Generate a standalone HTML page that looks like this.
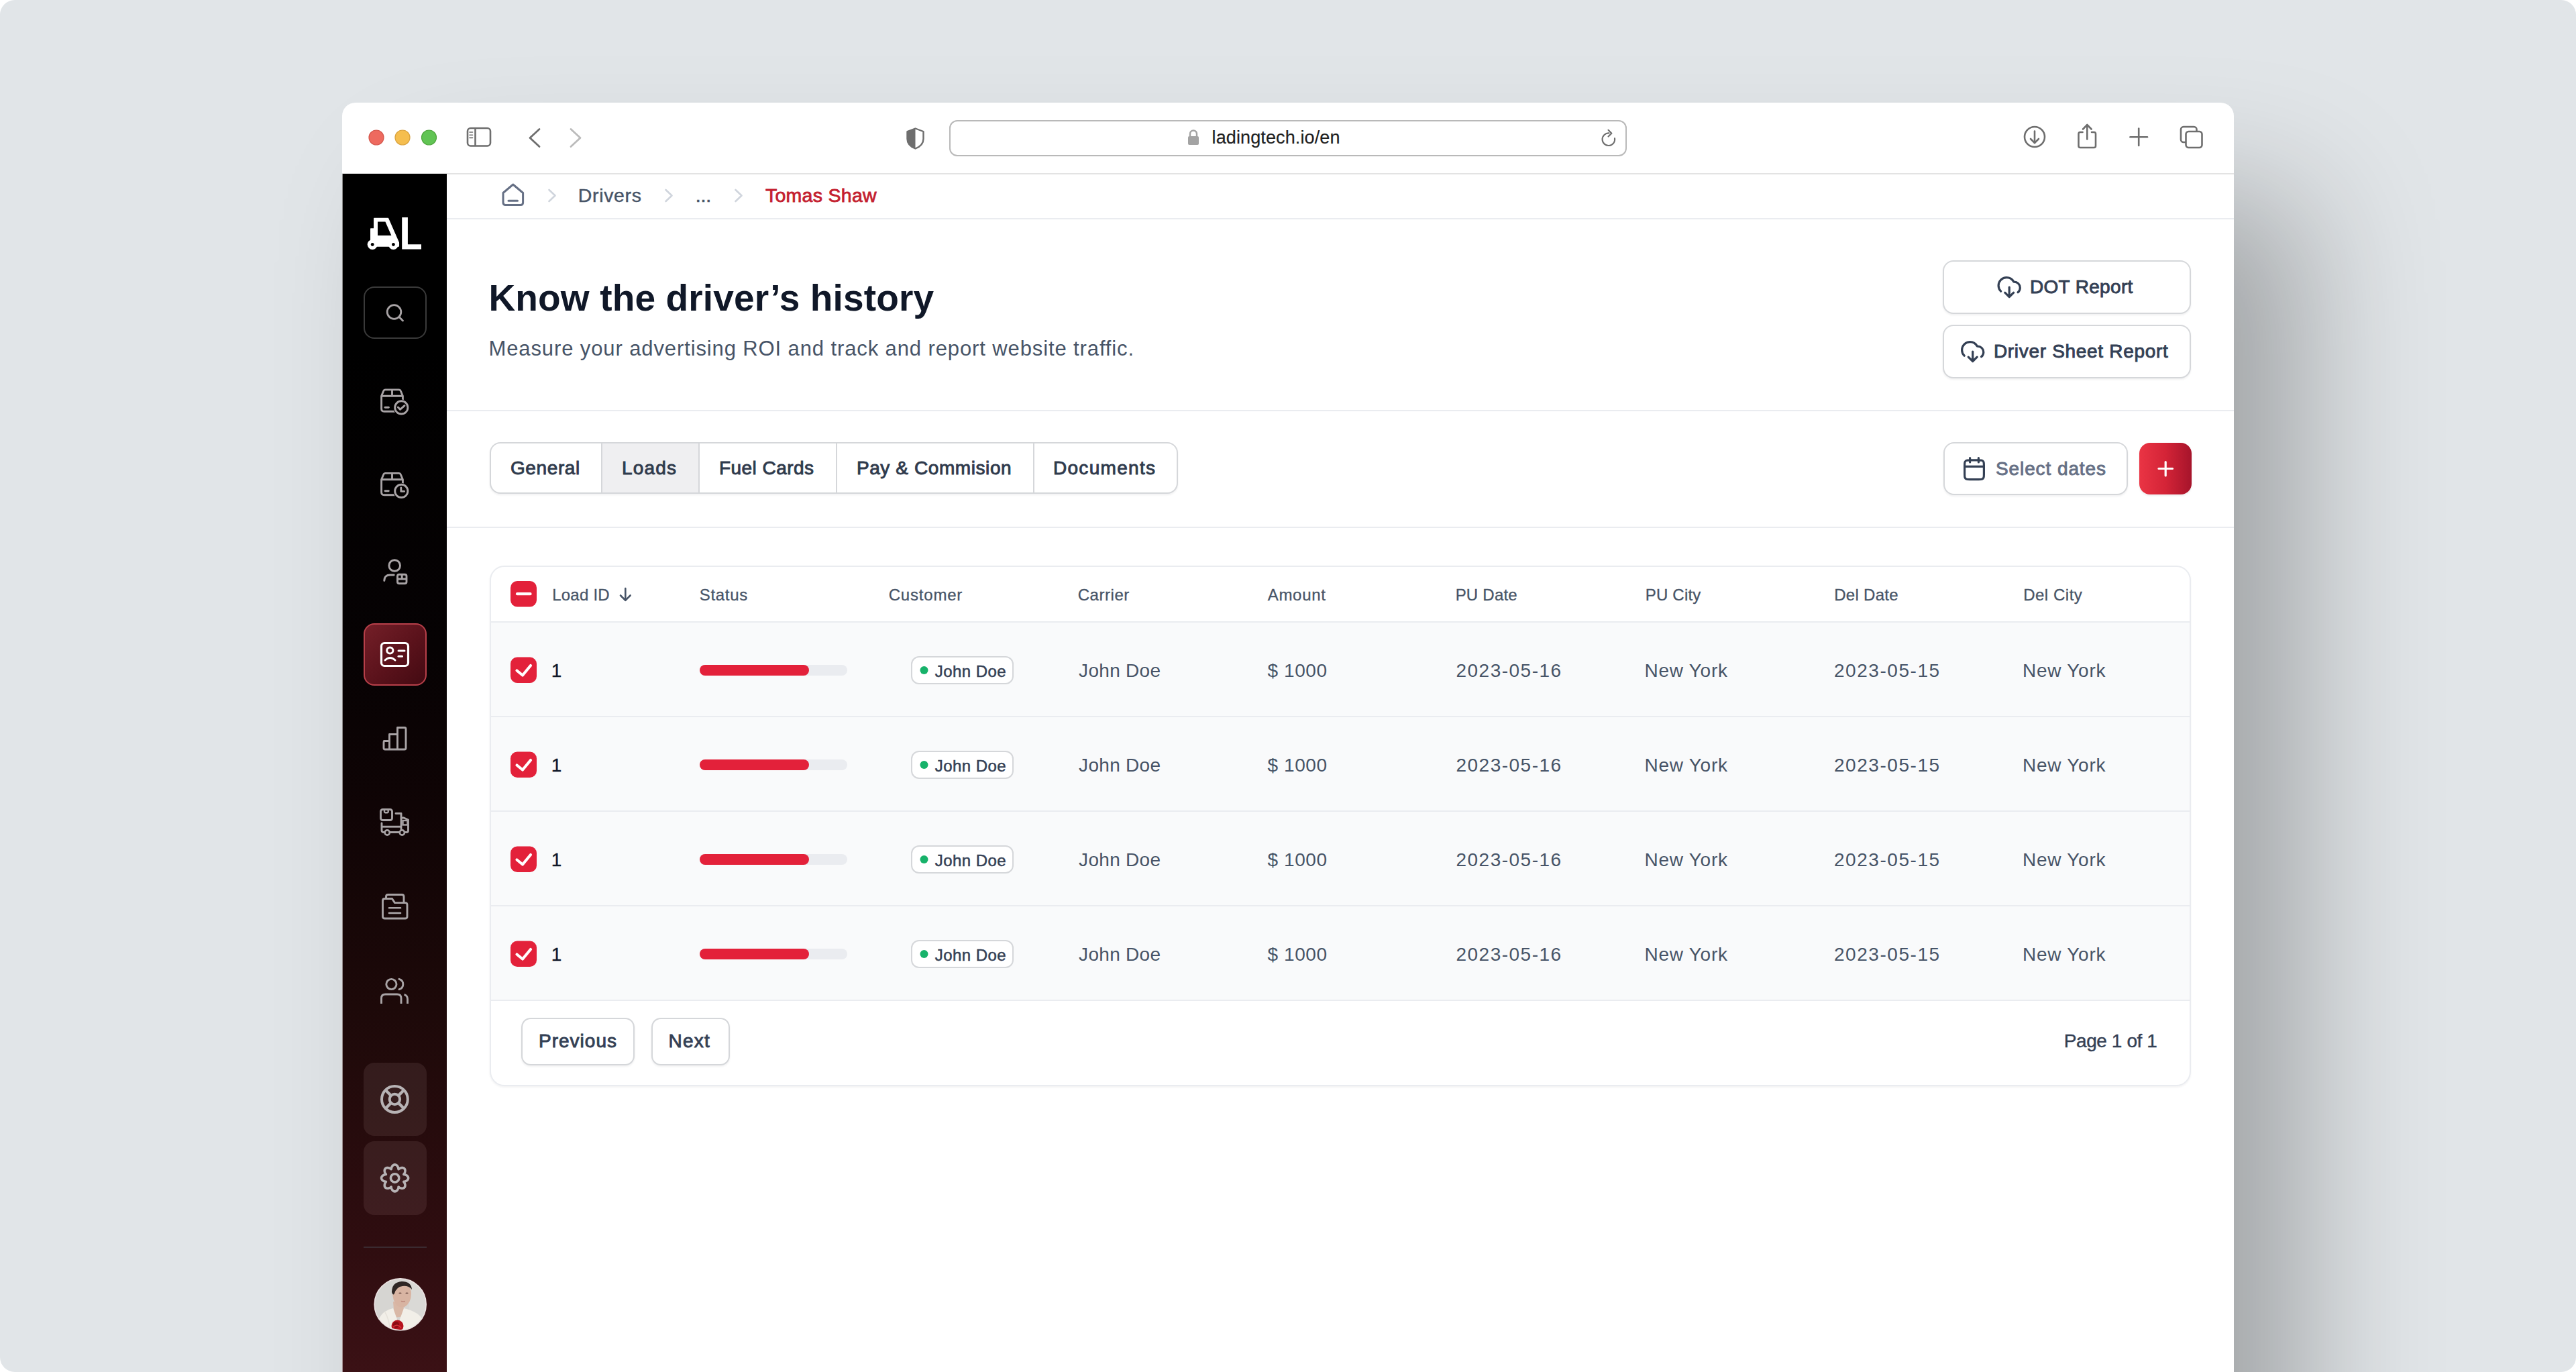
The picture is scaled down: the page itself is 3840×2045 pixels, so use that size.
<!DOCTYPE html>
<html><head><meta charset="utf-8"><style>
html,body{margin:0;padding:0;}
html{background:#ffffff;}
body{width:3840px;height:2045px;position:relative;overflow:hidden;background:#E1E5E8;border-radius:22px;font-family:"Liberation Sans", sans-serif;}
.t{position:absolute;white-space:nowrap;line-height:1;font-family:"Liberation Sans", sans-serif;}
.b{position:absolute;box-sizing:border-box;}
svg.ov{position:absolute;left:0;top:0;}
</style></head><body>
<div class="b" style="left:510px;top:153px;width:2820px;height:2147px;border-radius:20px 20px 0 0;box-shadow:107px 140px 200px rgba(0,0,0,0.28);"></div>
<div class="b" style="left:510px;top:153px;width:2820px;height:1947px;background:#ffffff;border-radius:20px 20px 0 0;"></div>
<div class="b" style="left:510px;top:258px;width:2820px;height:2px;background:#E3E3E3;"></div>
<div class="b" style="left:510px;top:259px;width:156px;height:1786px;border-left:1px solid rgba(255,255,255,0.55);background:linear-gradient(to bottom,#000000 0px,#000000 260px,#060203 700px,#0F0405 941px,#1D0909 1241px,#2F0D10 1601px,#3B1115 1786px);"></div>
<div class="b" style="left:666px;top:325px;width:2664px;height:2px;background:#EAECF0;"></div>
<div class="b" style="left:666px;top:611px;width:2664px;height:2px;background:#EAECF0;"></div>
<div class="b" style="left:666px;top:785px;width:2664px;height:2px;background:#EAECF0;"></div>
<div class="b" style="left:1415px;top:179px;width:1010px;height:54px;border:2.4px solid #B9B9B9;border-radius:12px;"></div>
<div class="t" style="left:1806.6px;top:192.14px;font-size:27px;color:#1F1F1F;font-weight:400;letter-spacing:0.111px;-webkit-text-stroke:0.2px #1F1F1F;">ladingtech.io/en</div>
<div class="t" style="left:861.7px;top:277.37px;font-size:28.5px;color:#475467;font-weight:400;letter-spacing:0.684px;-webkit-text-stroke:0.4px #475467;">Drivers</div>
<div class="t" style="left:1036.8px;top:277.37px;font-size:28.5px;color:#475467;font-weight:400;letter-spacing:-0.218px;-webkit-text-stroke:0.6px #475467;">...</div>
<div class="t" style="left:1140.9px;top:277.37px;font-size:28.5px;color:#C41E2F;font-weight:400;letter-spacing:0.292px;-webkit-text-stroke:0.8px #C41E2F;">Tomas Shaw</div>
<div class="t" style="left:728.5px;top:417.44px;font-size:55px;color:#101828;font-weight:700;letter-spacing:0.144px;">Know the driver&#8217;s history</div>
<div class="t" style="left:728.5px;top:504.26px;font-size:31px;color:#475467;font-weight:400;letter-spacing:0.886px;">Measure your advertising ROI and track and report website traffic.</div>
<div class="b" style="left:2896px;top:388px;width:370px;height:80px;border:2px solid #D5D7DA;border-radius:16px;background:#fff;box-shadow:0 2px 3px rgba(16,24,40,0.06);"></div>
<div class="b" style="left:2896px;top:484px;width:370px;height:80px;border:2px solid #D5D7DA;border-radius:16px;background:#fff;box-shadow:0 2px 3px rgba(16,24,40,0.06);"></div>
<div class="t" style="left:3025.95px;top:413.80px;font-size:28px;color:#344054;font-weight:400;letter-spacing:0.328px;-webkit-text-stroke:0.9px #344054;">DOT Report</div>
<div class="t" style="left:2971.95px;top:509.80px;font-size:28px;color:#344054;font-weight:400;letter-spacing:0.691px;-webkit-text-stroke:0.9px #344054;">Driver Sheet Report</div>
<div class="b" style="left:730px;top:659px;width:1026px;height:77px;border:2px solid #D5D7DA;border-radius:16px;background:#fff;box-shadow:0 2px 3px rgba(16,24,40,0.06);overflow:hidden;"></div>
<div class="b" style="left:897px;top:661px;width:145px;height:73px;background:#EFEFF1;"></div>
<div class="b" style="left:896px;top:661px;width:2px;height:73px;background:#D5D7DA;"></div>
<div class="b" style="left:1041px;top:661px;width:2px;height:73px;background:#D5D7DA;"></div>
<div class="b" style="left:1246px;top:661px;width:2px;height:73px;background:#D5D7DA;"></div>
<div class="b" style="left:1540px;top:661px;width:2px;height:73px;background:#D5D7DA;"></div>
<div class="t" style="left:760.95px;top:683.80px;font-size:28px;color:#2F3A4C;font-weight:400;letter-spacing:0.618px;-webkit-text-stroke:0.9px #2F3A4C;">General</div>
<div class="t" style="left:926.95px;top:683.80px;font-size:28px;color:#2F3A4C;font-weight:400;letter-spacing:1.203px;-webkit-text-stroke:0.9px #2F3A4C;">Loads</div>
<div class="t" style="left:1071.95px;top:683.80px;font-size:28px;color:#2F3A4C;font-weight:400;letter-spacing:0.462px;-webkit-text-stroke:0.9px #2F3A4C;">Fuel Cards</div>
<div class="t" style="left:1276.95px;top:683.80px;font-size:28px;color:#2F3A4C;font-weight:400;letter-spacing:0.583px;-webkit-text-stroke:0.9px #2F3A4C;">Pay &amp; Commision</div>
<div class="t" style="left:1569.95px;top:683.80px;font-size:28px;color:#2F3A4C;font-weight:400;letter-spacing:1.311px;-webkit-text-stroke:0.9px #2F3A4C;">Documents</div>
<div class="b" style="left:2897px;top:659px;width:275px;height:79px;border:2px solid #D5D7DA;border-radius:16px;background:#fff;box-shadow:0 2px 3px rgba(16,24,40,0.06);"></div>
<div class="t" style="left:2974.95px;top:684.80px;font-size:28px;color:#667085;font-weight:400;letter-spacing:0.909px;-webkit-text-stroke:0.9px #667085;">Select dates</div>
<div class="b" style="left:3189px;top:660px;width:78px;height:77px;border-radius:16px;background:linear-gradient(to right,#EA3444 0%,#D42437 50%,#A6142B 100%);box-shadow:0 2px 3px rgba(16,24,40,0.08);"></div>
<div class="b" style="left:730px;top:843px;width:2536px;height:776px;border:2px solid #EAECF0;border-radius:22px;background:#fff;box-shadow:0 2px 3px rgba(16,24,40,0.05);overflow:hidden;"></div>
<div class="b" style="left:732px;top:928px;width:2532px;height:563px;background:#F9FAFB;"></div>
<div class="b" style="left:732px;top:926px;width:2532px;height:2px;background:#EAECF0;"></div>
<div class="b" style="left:732px;top:1067px;width:2532px;height:2px;background:#EAECF0;"></div>
<div class="b" style="left:732px;top:1208px;width:2532px;height:2px;background:#EAECF0;"></div>
<div class="b" style="left:732px;top:1349px;width:2532px;height:2px;background:#EAECF0;"></div>
<div class="b" style="left:732px;top:1490px;width:2532px;height:2px;background:#EAECF0;"></div>
<div class="t" style="left:823.15px;top:875.18px;font-size:24px;color:#475467;font-weight:400;letter-spacing:0.246px;-webkit-text-stroke:0.3px #475467;">Load ID</div>
<div class="t" style="left:1042.65px;top:875.18px;font-size:24px;color:#475467;font-weight:400;letter-spacing:0.732px;-webkit-text-stroke:0.3px #475467;">Status</div>
<div class="t" style="left:1324.65px;top:875.18px;font-size:24px;color:#475467;font-weight:400;letter-spacing:0.809px;-webkit-text-stroke:0.3px #475467;">Customer</div>
<div class="t" style="left:1606.65px;top:875.18px;font-size:24px;color:#475467;font-weight:400;letter-spacing:0.559px;-webkit-text-stroke:0.3px #475467;">Carrier</div>
<div class="t" style="left:1889.65px;top:875.18px;font-size:24px;color:#475467;font-weight:400;letter-spacing:0.731px;-webkit-text-stroke:0.3px #475467;">Amount</div>
<div class="t" style="left:2169.65px;top:875.18px;font-size:24px;color:#475467;font-weight:400;letter-spacing:0.224px;-webkit-text-stroke:0.3px #475467;">PU Date</div>
<div class="t" style="left:2452.65px;top:875.18px;font-size:24px;color:#475467;font-weight:400;letter-spacing:0.227px;-webkit-text-stroke:0.3px #475467;">PU City</div>
<div class="t" style="left:2734.15px;top:875.18px;font-size:24px;color:#475467;font-weight:400;letter-spacing:0.31px;-webkit-text-stroke:0.3px #475467;">Del Date</div>
<div class="t" style="left:3016.15px;top:875.18px;font-size:24px;color:#475467;font-weight:400;letter-spacing:0.527px;-webkit-text-stroke:0.3px #475467;">Del City</div>
<div class="t" style="left:821.65px;top:985.80px;font-size:28px;color:#101828;font-weight:400;letter-spacing:0px;-webkit-text-stroke:0.3px #101828;">1</div>
<div class="b" style="left:1043px;top:991px;width:220px;height:16px;background:#EAECF0;border-radius:8px;"></div>
<div class="b" style="left:1043px;top:991px;width:163px;height:16px;background:#E3213A;border-radius:8px;"></div>
<div class="b" style="left:1358px;top:978px;width:153px;height:42px;border:2px solid #D5D7DA;border-radius:12px;background:#fff;"></div>
<div class="t" style="left:1393.75px;top:988.68px;font-size:24px;color:#344054;font-weight:400;letter-spacing:0.444px;-webkit-text-stroke:0.5px #344054;">John Doe</div>
<div class="t" style="left:1608.1px;top:985.80px;font-size:28px;color:#475467;font-weight:400;letter-spacing:0.302px;">John Doe</div>
<div class="t" style="left:1889.5px;top:985.80px;font-size:28px;color:#475467;font-weight:400;letter-spacing:0.586px;">$ 1000</div>
<div class="t" style="left:2170.5px;top:985.80px;font-size:28px;color:#475467;font-weight:400;letter-spacing:1.483px;">2023-05-16</div>
<div class="t" style="left:2451.5px;top:985.80px;font-size:28px;color:#475467;font-weight:400;letter-spacing:0.744px;">New York</div>
<div class="t" style="left:2734.0px;top:985.80px;font-size:28px;color:#475467;font-weight:400;letter-spacing:1.538px;">2023-05-15</div>
<div class="t" style="left:3015.0px;top:985.80px;font-size:28px;color:#475467;font-weight:400;letter-spacing:0.744px;">New York</div>
<div class="t" style="left:821.65px;top:1126.80px;font-size:28px;color:#101828;font-weight:400;letter-spacing:0px;-webkit-text-stroke:0.3px #101828;">1</div>
<div class="b" style="left:1043px;top:1132px;width:220px;height:16px;background:#EAECF0;border-radius:8px;"></div>
<div class="b" style="left:1043px;top:1132px;width:163px;height:16px;background:#E3213A;border-radius:8px;"></div>
<div class="b" style="left:1358px;top:1119px;width:153px;height:42px;border:2px solid #D5D7DA;border-radius:12px;background:#fff;"></div>
<div class="t" style="left:1393.75px;top:1129.68px;font-size:24px;color:#344054;font-weight:400;letter-spacing:0.444px;-webkit-text-stroke:0.5px #344054;">John Doe</div>
<div class="t" style="left:1608.1px;top:1126.80px;font-size:28px;color:#475467;font-weight:400;letter-spacing:0.302px;">John Doe</div>
<div class="t" style="left:1889.5px;top:1126.80px;font-size:28px;color:#475467;font-weight:400;letter-spacing:0.586px;">$ 1000</div>
<div class="t" style="left:2170.5px;top:1126.80px;font-size:28px;color:#475467;font-weight:400;letter-spacing:1.483px;">2023-05-16</div>
<div class="t" style="left:2451.5px;top:1126.80px;font-size:28px;color:#475467;font-weight:400;letter-spacing:0.744px;">New York</div>
<div class="t" style="left:2734.0px;top:1126.80px;font-size:28px;color:#475467;font-weight:400;letter-spacing:1.538px;">2023-05-15</div>
<div class="t" style="left:3015.0px;top:1126.80px;font-size:28px;color:#475467;font-weight:400;letter-spacing:0.744px;">New York</div>
<div class="t" style="left:821.65px;top:1267.80px;font-size:28px;color:#101828;font-weight:400;letter-spacing:0px;-webkit-text-stroke:0.3px #101828;">1</div>
<div class="b" style="left:1043px;top:1273px;width:220px;height:16px;background:#EAECF0;border-radius:8px;"></div>
<div class="b" style="left:1043px;top:1273px;width:163px;height:16px;background:#E3213A;border-radius:8px;"></div>
<div class="b" style="left:1358px;top:1260px;width:153px;height:42px;border:2px solid #D5D7DA;border-radius:12px;background:#fff;"></div>
<div class="t" style="left:1393.75px;top:1270.68px;font-size:24px;color:#344054;font-weight:400;letter-spacing:0.444px;-webkit-text-stroke:0.5px #344054;">John Doe</div>
<div class="t" style="left:1608.1px;top:1267.80px;font-size:28px;color:#475467;font-weight:400;letter-spacing:0.302px;">John Doe</div>
<div class="t" style="left:1889.5px;top:1267.80px;font-size:28px;color:#475467;font-weight:400;letter-spacing:0.586px;">$ 1000</div>
<div class="t" style="left:2170.5px;top:1267.80px;font-size:28px;color:#475467;font-weight:400;letter-spacing:1.483px;">2023-05-16</div>
<div class="t" style="left:2451.5px;top:1267.80px;font-size:28px;color:#475467;font-weight:400;letter-spacing:0.744px;">New York</div>
<div class="t" style="left:2734.0px;top:1267.80px;font-size:28px;color:#475467;font-weight:400;letter-spacing:1.538px;">2023-05-15</div>
<div class="t" style="left:3015.0px;top:1267.80px;font-size:28px;color:#475467;font-weight:400;letter-spacing:0.744px;">New York</div>
<div class="t" style="left:821.65px;top:1408.80px;font-size:28px;color:#101828;font-weight:400;letter-spacing:0px;-webkit-text-stroke:0.3px #101828;">1</div>
<div class="b" style="left:1043px;top:1414px;width:220px;height:16px;background:#EAECF0;border-radius:8px;"></div>
<div class="b" style="left:1043px;top:1414px;width:163px;height:16px;background:#E3213A;border-radius:8px;"></div>
<div class="b" style="left:1358px;top:1401px;width:153px;height:42px;border:2px solid #D5D7DA;border-radius:12px;background:#fff;"></div>
<div class="t" style="left:1393.75px;top:1411.68px;font-size:24px;color:#344054;font-weight:400;letter-spacing:0.444px;-webkit-text-stroke:0.5px #344054;">John Doe</div>
<div class="t" style="left:1608.1px;top:1408.80px;font-size:28px;color:#475467;font-weight:400;letter-spacing:0.302px;">John Doe</div>
<div class="t" style="left:1889.5px;top:1408.80px;font-size:28px;color:#475467;font-weight:400;letter-spacing:0.586px;">$ 1000</div>
<div class="t" style="left:2170.5px;top:1408.80px;font-size:28px;color:#475467;font-weight:400;letter-spacing:1.483px;">2023-05-16</div>
<div class="t" style="left:2451.5px;top:1408.80px;font-size:28px;color:#475467;font-weight:400;letter-spacing:0.744px;">New York</div>
<div class="t" style="left:2734.0px;top:1408.80px;font-size:28px;color:#475467;font-weight:400;letter-spacing:1.538px;">2023-05-15</div>
<div class="t" style="left:3015.0px;top:1408.80px;font-size:28px;color:#475467;font-weight:400;letter-spacing:0.744px;">New York</div>
<div class="b" style="left:777px;top:1517px;width:169px;height:71px;border:2px solid #D5D7DA;border-radius:16px;background:#fff;box-shadow:0 2px 3px rgba(16,24,40,0.06);border-radius:14px;"></div>
<div class="b" style="left:971px;top:1517px;width:117px;height:71px;border:2px solid #D5D7DA;border-radius:16px;background:#fff;box-shadow:0 2px 3px rgba(16,24,40,0.06);border-radius:14px;"></div>
<div class="t" style="left:802.95px;top:1538.30px;font-size:28px;color:#344054;font-weight:400;letter-spacing:1.023px;-webkit-text-stroke:0.9px #344054;">Previous</div>
<div class="t" style="left:996.55px;top:1538.30px;font-size:28px;color:#344054;font-weight:400;letter-spacing:1.236px;-webkit-text-stroke:0.9px #344054;">Next</div>
<div class="t" style="left:3076.7px;top:1538.30px;font-size:28px;color:#344054;font-weight:400;letter-spacing:-0.405px;-webkit-text-stroke:0.4px #344054;">Page 1 of 1</div>
<div class="b" style="left:542px;top:427px;width:94px;height:78px;border:2px solid #3A3A3A;border-radius:16px;"></div>
<div class="b" style="left:542px;top:929px;width:94px;height:93px;border:2px solid #B8404A;border-radius:16px;background:linear-gradient(135deg,#741F28 0%,#5A121B 55%,#430A12 100%);"></div>
<div class="b" style="left:542px;top:1584px;width:94px;height:109px;background:rgba(255,215,215,0.085);border-radius:16px;"></div>
<div class="b" style="left:542px;top:1701px;width:94px;height:110px;background:rgba(255,215,215,0.085);border-radius:16px;"></div>
<div class="b" style="left:542px;top:1858px;width:94px;height:2px;background:#3A2A30;"></div>
<!--CONTENT--><svg class="ov" width="3840" height="2045" viewBox="0 0 3840 2045"><circle cx="561" cy="205" r="11" fill="#EE6A5F" stroke="#D4574C" stroke-width="1.2"/><circle cx="600" cy="205" r="11" fill="#F5BE4F" stroke="#D9A23E" stroke-width="1.2"/><circle cx="639.5" cy="205" r="11" fill="#61C454" stroke="#50A63F" stroke-width="1.2"/><rect x="697" y="191" width="34" height="26.5" rx="4.5" fill="none" stroke="#6E6E6E" stroke-width="2.6"/><line x1="708.5" y1="191" x2="708.5" y2="217.5" stroke="#6E6E6E" stroke-width="2.6"/><line x1="700" y1="197" x2="704.5" y2="197" stroke="#6E6E6E" stroke-width="1.6" stroke-linecap="round"/><line x1="700" y1="201.2" x2="704.5" y2="201.2" stroke="#6E6E6E" stroke-width="1.6" stroke-linecap="round"/><line x1="700" y1="205.4" x2="704.5" y2="205.4" stroke="#6E6E6E" stroke-width="1.6" stroke-linecap="round"/><polyline points="804,192.5 790,205.5 804,218.5" fill="none" stroke="#6E6E6E" stroke-width="2.8" stroke-linecap="round" stroke-linejoin="round"/><polyline points="851,192.5 865,205.5 851,218.5" fill="none" stroke="#BBBBBB" stroke-width="2.8" stroke-linecap="round" stroke-linejoin="round"/><path d="M1364.5,191.5 L1376.5,196 L1376.5,207 C1376.5,214 1371,219 1364.5,221.5 C1358,219 1352.5,214 1352.5,207 L1352.5,196 Z" fill="none" stroke="#6E6E6E" stroke-width="2.4" stroke-linejoin="round"/><path d="M1364.5,191.5 L1352.5,196 L1352.5,207 C1352.5,214 1358,219 1364.5,221.5 Z" fill="#6E6E6E"/><rect x="1771" y="203" width="16" height="13" rx="2" fill="#A3A3A3"/><path d="M1774,204 L1774,199.5 A5,5 0 0 1 1784,199.5 L1784,204" fill="none" stroke="#A3A3A3" stroke-width="2.4"/><path d="M2407,206 A9.3,9.3 0 1 1 2398.5,198.4" fill="none" stroke="#6E6E6E" stroke-width="2.1" stroke-linecap="round"/><polyline points="2397.5,193.8 2402.4,198.7 2397.5,203.5" fill="none" stroke="#6E6E6E" stroke-width="2.1" stroke-linecap="round" stroke-linejoin="round"/><circle cx="3033" cy="204" r="15" fill="none" stroke="#6E6E6E" stroke-width="2.6"/><line x1="3033" y1="195.5" x2="3033" y2="213" stroke="#6E6E6E" stroke-width="2.6" stroke-linecap="round"/><polyline points="3027,207 3033,213 3039,207" fill="none" stroke="#6E6E6E" stroke-width="2.6" stroke-linecap="round" stroke-linejoin="round"/><path d="M3104.5,197 L3101,197 Q3098.5,197 3098.5,199.5 L3098.5,217.5 Q3098.5,220 3101,220 L3121.5,220 Q3124,220 3124,217.5 L3124,199.5 Q3124,197 3121.5,197 L3118,197" fill="none" stroke="#6E6E6E" stroke-width="2.6" stroke-linecap="round" stroke-linejoin="round"/><line x1="3111.3" y1="186.5" x2="3111.3" y2="207.5" stroke="#6E6E6E" stroke-width="2.6" stroke-linecap="round"/><polyline points="3105,192.5 3111.3,186 3117.6,192.5" fill="none" stroke="#6E6E6E" stroke-width="2.6" stroke-linecap="round" stroke-linejoin="round"/><line x1="3175.5" y1="204.2" x2="3201" y2="204.2" stroke="#6E6E6E" stroke-width="2.6" stroke-linecap="round"/><line x1="3188.2" y1="191.5" x2="3188.2" y2="217" stroke="#6E6E6E" stroke-width="2.6" stroke-linecap="round"/><rect x="3251" y="189" width="23.5" height="23" rx="4" fill="none" stroke="#6E6E6E" stroke-width="2.6"/><rect x="3258.5" y="196" width="24" height="24" rx="4" fill="#ffffff" stroke="#6E6E6E" stroke-width="2.6"/><path d="M750,287.5 L764.8,275 L779.6,287.5 L779.6,302 Q779.6,305.5 776,305.5 L753.6,305.5 Q750,305.5 750,302 Z" fill="none" stroke="#667085" stroke-width="3" stroke-linejoin="round"/><line x1="758" y1="299.3" x2="771.5" y2="299.3" stroke="#667085" stroke-width="3" stroke-linecap="round"/><polyline points="818.5,283 827.5,291.5 818.5,300" fill="none" stroke="#D0D5DD" stroke-width="2.6" stroke-linecap="round" stroke-linejoin="round"/><polyline points="992.5,283 1001.5,291.5 992.5,300" fill="none" stroke="#D0D5DD" stroke-width="2.6" stroke-linecap="round" stroke-linejoin="round"/><polyline points="1096.5,283 1105.5,291.5 1096.5,300" fill="none" stroke="#D0D5DD" stroke-width="2.6" stroke-linecap="round" stroke-linejoin="round"/><g transform="translate(2975.89,408.78) scale(1.61)"><path d="M8 17L12 21M12 21L16 17M12 21V12M20 16.7428C21.2215 15.734 22 14.2079 22 12.5C22 9.46243 19.5376 7 16.5 7C16.2815 7 16.0771 6.886 15.9661 6.69774C14.6621 4.48484 12.2544 3 9.5 3C5.35786 3 2 6.35786 2 10.5C2 12.5661 2.83545 14.4371 4.18695 15.7935" fill="none" stroke="#344054" stroke-width="2" stroke-linecap="round" stroke-linejoin="round"/></g><g transform="translate(2921.39,504.78) scale(1.61)"><path d="M8 17L12 21M12 21L16 17M12 21V12M20 16.7428C21.2215 15.734 22 14.2079 22 12.5C22 9.46243 19.5376 7 16.5 7C16.2815 7 16.0771 6.886 15.9661 6.69774C14.6621 4.48484 12.2544 3 9.5 3C5.35786 3 2 6.35786 2 10.5C2 12.5661 2.83545 14.4371 4.18695 15.7935" fill="none" stroke="#344054" stroke-width="2" stroke-linecap="round" stroke-linejoin="round"/></g><g transform="translate(2923.80,679.40) scale(1.6)"><path d="M21 10H3M16 2V6M8 2V6M7.8 22H16.2C17.8802 22 18.7202 22 19.362 21.673C19.9265 21.3854 20.3854 20.9265 20.673 20.362C21 19.7202 21 18.8802 21 17.2V8.8C21 7.11984 21 6.27976 20.673 5.63803C20.3854 5.07354 19.9265 4.6146 19.362 4.32698C18.7202 4 17.8802 4 16.2 4H7.8C6.11984 4 5.27976 4 4.63803 4.32698C4.07354 4.6146 3.6146 5.07354 3.32698 5.63803C3 6.27976 3 7.11984 3 8.8V17.2C3 18.8802 3 19.7202 3.32698 20.362C3.6146 20.9265 4.07354 21.3854 4.63803 21.673C5.27976 22 6.11984 22 7.8 22Z" fill="none" stroke="#344054" stroke-width="2" stroke-linecap="round" stroke-linejoin="round"/></g><line x1="3218" y1="698.5" x2="3238.5" y2="698.5" stroke="#fff" stroke-width="3.2" stroke-linecap="round"/><line x1="3228.2" y1="688.5" x2="3228.2" y2="709" stroke="#fff" stroke-width="3.2" stroke-linecap="round"/><rect x="761" y="866" width="39" height="38.5" rx="10" fill="#E3213A"/><line x1="771" y1="885.2" x2="790.5" y2="885.2" stroke="#fff" stroke-width="4.2" stroke-linecap="round"/><line x1="932.3" y1="877" x2="932.3" y2="894.5" stroke="#475467" stroke-width="2.6" stroke-linecap="round"/><polyline points="925,887.5 932.3,894.8 939.6,887.5" fill="none" stroke="#475467" stroke-width="2.6" stroke-linecap="round" stroke-linejoin="round"/><rect x="761" y="979.5" width="39" height="38.5" rx="10" fill="#E3213A"/><polyline points="770.5,999.5 779,1006.5 791,992" fill="none" stroke="#fff" stroke-width="4.2" stroke-linecap="round" stroke-linejoin="round"/><circle cx="1377.5" cy="999" r="6" fill="#17B26A"/><rect x="761" y="1120.5" width="39" height="38.5" rx="10" fill="#E3213A"/><polyline points="770.5,1140.5 779,1147.5 791,1133" fill="none" stroke="#fff" stroke-width="4.2" stroke-linecap="round" stroke-linejoin="round"/><circle cx="1377.5" cy="1140" r="6" fill="#17B26A"/><rect x="761" y="1261.5" width="39" height="38.5" rx="10" fill="#E3213A"/><polyline points="770.5,1281.5 779,1288.5 791,1274" fill="none" stroke="#fff" stroke-width="4.2" stroke-linecap="round" stroke-linejoin="round"/><circle cx="1377.5" cy="1281" r="6" fill="#17B26A"/><rect x="761" y="1402.5" width="39" height="38.5" rx="10" fill="#E3213A"/><polyline points="770.5,1422.5 779,1429.5 791,1415" fill="none" stroke="#fff" stroke-width="4.2" stroke-linecap="round" stroke-linejoin="round"/><circle cx="1377.5" cy="1422" r="6" fill="#17B26A"/><g transform="translate(540,310)"><path d="M17.8,15.5 L38.5,15.5 L54.3,51.5 L54.3,57 L12.8,57 L12.8,31 L17.8,31 Z" fill="#fff" stroke="#fff" stroke-width="1.5" stroke-linejoin="round"/><path d="M23,20.4 L34.4,20.4 L43.4,41.1 L23,41.1 Z" fill="#000"/><circle cx="15.2" cy="54.5" r="7.5" fill="#fff"/><circle cx="15.2" cy="54.5" r="2.4" fill="#000"/><circle cx="46.4" cy="54.5" r="7.5" fill="#fff"/><circle cx="46.4" cy="54.5" r="2.4" fill="#000"/><path d="M59.2,14 L67.9,14 L67.9,54.2 L88,54.2 L88,61.6 L59.2,61.6 Z" fill="#fff"/></g><circle cx="587.5" cy="465" r="10.3" fill="none" stroke="#A8A3A5" stroke-width="2.8"/><line x1="595" y1="472.5" x2="600.5" y2="478" stroke="#A8A3A5" stroke-width="2.8" stroke-linecap="round"/><path d="M600.4,597 L600.4,590.2 L597.4,583 Q596.6,580.9 594.4,580.9 L574.6,580.9 Q572.4,580.9 571.6,583 L568.6,590.2 L568.6,609.3 Q568.6,613.3 572.6,613.3 L589,613.3" fill="none" stroke="#A8A3A5" stroke-width="2.9" stroke-linejoin="round"/><line x1="568.6" y1="590.2" x2="600.4" y2="590.2" stroke="#A8A3A5" stroke-width="2.9"/><line x1="584.5" y1="580.9" x2="584.5" y2="590.2" stroke="#A8A3A5" stroke-width="2.9"/><line x1="574" y1="607.2" x2="579.3" y2="607.2" stroke="#A8A3A5" stroke-width="2.9" stroke-linecap="round"/><circle cx="598.3" cy="607.4" r="10" fill="#040101" stroke="#040101" stroke-width="4"/><circle cx="598.3" cy="607.4" r="9.6" fill="none" stroke="#A8A3A5" stroke-width="2.9"/><polyline points="593.3,607.1 596.4,610.3 603.0,604.6" fill="none" stroke="#A8A3A5" stroke-width="2.9" stroke-linecap="round" stroke-linejoin="round"/><path d="M600.4,721.5 L600.4,714.7 L597.4,707.5 Q596.6,705.4 594.4,705.4 L574.6,705.4 Q572.4,705.4 571.6,707.5 L568.6,714.7 L568.6,733.8 Q568.6,737.8 572.6,737.8 L589,737.8" fill="none" stroke="#A8A3A5" stroke-width="2.9" stroke-linejoin="round"/><line x1="568.6" y1="714.7" x2="600.4" y2="714.7" stroke="#A8A3A5" stroke-width="2.9"/><line x1="584.5" y1="705.4" x2="584.5" y2="714.7" stroke="#A8A3A5" stroke-width="2.9"/><line x1="574" y1="731.7" x2="579.3" y2="731.7" stroke="#A8A3A5" stroke-width="2.9" stroke-linecap="round"/><circle cx="598.3" cy="731.9" r="10" fill="#040101" stroke="#040101" stroke-width="4"/><circle cx="598.3" cy="731.9" r="9.6" fill="none" stroke="#A8A3A5" stroke-width="2.9"/><polyline points="597.8,726.9 597.8,732.4 602.5999999999999,732.4" fill="none" stroke="#A8A3A5" stroke-width="2.9" stroke-linecap="round" stroke-linejoin="round"/><circle cx="588.2" cy="843" r="8.3" fill="none" stroke="#A8A3A5" stroke-width="2.9"/><path d="M572.8,865.5 C572.8,859.5 576.5,857 581,857 L587.2,857" fill="none" stroke="#A8A3A5" stroke-width="2.9" stroke-linecap="round"/><rect x="592.5" y="856.3" width="13.5" height="13.5" rx="2.5" fill="none" stroke="#A8A3A5" stroke-width="2.9"/><line x1="592.5" y1="863" x2="606" y2="863" stroke="#A8A3A5" stroke-width="2.9"/><line x1="599.2" y1="856.3" x2="599.2" y2="863" stroke="#A8A3A5" stroke-width="2.9"/><rect x="568.5" y="958.5" width="40" height="34" rx="4.5" fill="none" stroke="#fff" stroke-width="3.2"/><circle cx="581.3" cy="969.5" r="4.6" fill="none" stroke="#fff" stroke-width="3"/><path d="M574,984 Q581.5,977 589,984" fill="none" stroke="#fff" stroke-width="3" stroke-linecap="round"/><line x1="594" y1="970" x2="603" y2="970" stroke="#fff" stroke-width="3" stroke-linecap="round"/><line x1="594" y1="978.3" x2="599.5" y2="978.3" stroke="#fff" stroke-width="3" stroke-linecap="round"/><path d="M572.5,1104.5 L580.5,1104.5 L580.5,1094.5 L592.5,1094.5 L592.5,1084.5 Q592.5,1084.5 594.5,1084.5 L603,1084.5 Q605,1084.5 605,1086.5 L605,1115 Q605,1117 603,1117 L574,1117 Q572,1117 572,1115 L572,1106.5 Q572,1104.5 574,1104.5 Z" fill="none" stroke="#A8A3A5" stroke-width="2.9" stroke-linejoin="round"/><line x1="580.5" y1="1104.5" x2="580.5" y2="1117" stroke="#A8A3A5" stroke-width="2.9"/><line x1="592.5" y1="1094.5" x2="592.5" y2="1117" stroke="#A8A3A5" stroke-width="2.9"/><rect x="567.5" y="1206.5" width="17" height="16" rx="3" fill="none" stroke="#A8A3A5" stroke-width="2.9"/><path d="M573,1206.5 L573,1210 Q573,1211.2 574.2,1211.2 L577.5,1211.2 Q578.7,1211.2 578.7,1210 L578.7,1206.5" fill="none" stroke="#A8A3A5" stroke-width="2.4"/><path d="M569,1227 L569,1237.5 Q569,1240.5 572,1240.5 L606,1240.5 Q608.5,1240.5 608.5,1238 L608.5,1222 L602,1219 L598,1219 L598,1212.5 L590,1212.5" fill="none" stroke="#A8A3A5" stroke-width="2.9" stroke-linejoin="round" stroke-linecap="round"/><line x1="569" y1="1232.2" x2="597" y2="1232.2" stroke="#A8A3A5" stroke-width="2.9"/><rect x="600.5" y="1223" width="7" height="6.5" fill="none" stroke="#A8A3A5" stroke-width="2.4"/><line x1="598" y1="1219" x2="598" y2="1240" stroke="#A8A3A5" stroke-width="2.9"/><circle cx="577.2" cy="1241" r="3.6" fill="#120607" stroke="#A8A3A5" stroke-width="2.6"/><circle cx="599.4" cy="1241" r="3.6" fill="#120607" stroke="#A8A3A5" stroke-width="2.6"/><path d="M575.5,1339 L575.5,1336.5 Q575.5,1333.5 578.5,1333.5 L599,1333.5 Q602,1333.5 602,1336.5 L602,1345.5" fill="none" stroke="#A8A3A5" stroke-width="2.9" stroke-linejoin="round"/><path d="M570.5,1342.5 Q570.5,1339.5 573.5,1339.5 L584.5,1339.5 L588.5,1345.6 L604,1345.6 Q607,1345.6 607,1348.6 L607,1366 Q607,1369 604,1369 L573.5,1369 Q570.5,1369 570.5,1366 Z" fill="none" stroke="#A8A3A5" stroke-width="2.9" stroke-linejoin="round"/><line x1="580" y1="1353.3" x2="597" y2="1353.3" stroke="#A8A3A5" stroke-width="2.6" stroke-linecap="round"/><line x1="580" y1="1360.9" x2="597" y2="1360.9" stroke="#A8A3A5" stroke-width="2.6" stroke-linecap="round"/><circle cx="583.4" cy="1467" r="7.6" fill="none" stroke="#A8A3A5" stroke-width="2.9"/><path d="M595,1459.3 A8,8 0 0 1 595,1474.7" fill="none" stroke="#A8A3A5" stroke-width="2.9" stroke-linecap="round"/><path d="M568.5,1496 L568.5,1488 Q568.5,1482 574.5,1482 L592,1482 Q598,1482 598,1488 L598,1496" fill="none" stroke="#A8A3A5" stroke-width="2.9"/><path d="M602.5,1482.3 Q607.5,1484 607.5,1489 L607.5,1496" fill="none" stroke="#A8A3A5" stroke-width="2.9"/><circle cx="588.4" cy="1638.5" r="19.4" fill="none" stroke="#B7B3B5" stroke-width="4"/><circle cx="588.4" cy="1638.5" r="7.7" fill="none" stroke="#B7B3B5" stroke-width="4"/><line x1="594.06" y1="1644.16" x2="602.12" y2="1652.22" stroke="#B7B3B5" stroke-width="4.4"/><line x1="582.74" y1="1644.16" x2="574.68" y2="1652.22" stroke="#B7B3B5" stroke-width="4.4"/><line x1="582.74" y1="1632.84" x2="574.68" y2="1624.78" stroke="#B7B3B5" stroke-width="4.4"/><line x1="594.06" y1="1632.84" x2="602.12" y2="1624.78" stroke="#B7B3B5" stroke-width="4.4"/><polygon points="588.60,1735.90 589.12,1735.94 589.64,1736.05 590.15,1736.23 590.64,1736.48 591.12,1736.79 591.57,1737.17 591.99,1737.61 592.38,1738.11 592.74,1738.65 593.06,1739.24 593.35,1739.86 593.60,1740.52 593.80,1741.21 593.96,1741.93 594.07,1742.69 594.69,1742.23 595.31,1741.84 595.94,1741.49 596.58,1741.20 597.23,1740.96 597.87,1740.77 598.51,1740.64 599.13,1740.57 599.74,1740.56 600.33,1740.61 600.89,1740.72 601.42,1740.89 601.90,1741.13 602.35,1741.41 602.74,1741.76 603.09,1742.15 603.37,1742.60 603.61,1743.08 603.78,1743.61 603.89,1744.17 603.94,1744.76 603.93,1745.37 603.86,1745.99 603.73,1746.63 603.54,1747.27 603.30,1747.92 603.01,1748.56 602.66,1749.19 602.27,1749.81 601.81,1750.43 602.57,1750.54 603.29,1750.70 603.98,1750.90 604.64,1751.15 605.26,1751.44 605.85,1751.76 606.39,1752.12 606.89,1752.51 607.33,1752.93 607.71,1753.38 608.02,1753.86 608.27,1754.35 608.45,1754.86 608.56,1755.38 608.60,1755.90 608.56,1756.42 608.45,1756.94 608.27,1757.45 608.02,1757.94 607.71,1758.42 607.33,1758.87 606.89,1759.29 606.39,1759.68 605.85,1760.04 605.26,1760.36 604.64,1760.65 603.98,1760.90 603.29,1761.10 602.57,1761.26 601.81,1761.37 602.27,1761.99 602.66,1762.61 603.01,1763.24 603.30,1763.88 603.54,1764.53 603.73,1765.17 603.86,1765.81 603.93,1766.43 603.94,1767.04 603.89,1767.63 603.78,1768.19 603.61,1768.72 603.37,1769.20 603.09,1769.65 602.74,1770.04 602.35,1770.39 601.90,1770.67 601.42,1770.91 600.89,1771.08 600.33,1771.19 599.74,1771.24 599.13,1771.23 598.51,1771.16 597.87,1771.03 597.23,1770.84 596.58,1770.60 595.94,1770.31 595.31,1769.96 594.69,1769.57 594.07,1769.11 593.96,1769.87 593.80,1770.59 593.60,1771.28 593.35,1771.94 593.06,1772.56 592.74,1773.15 592.38,1773.69 591.99,1774.19 591.57,1774.63 591.12,1775.01 590.64,1775.32 590.15,1775.57 589.64,1775.75 589.12,1775.86 588.60,1775.90 588.08,1775.86 587.56,1775.75 587.05,1775.57 586.56,1775.32 586.08,1775.01 585.63,1774.63 585.21,1774.19 584.82,1773.69 584.46,1773.15 584.14,1772.56 583.85,1771.94 583.60,1771.28 583.40,1770.59 583.24,1769.87 583.13,1769.11 582.51,1769.57 581.89,1769.96 581.26,1770.31 580.62,1770.60 579.97,1770.84 579.33,1771.03 578.69,1771.16 578.07,1771.23 577.46,1771.24 576.87,1771.19 576.31,1771.08 575.78,1770.91 575.30,1770.67 574.85,1770.39 574.46,1770.04 574.11,1769.65 573.83,1769.20 573.59,1768.72 573.42,1768.19 573.31,1767.63 573.26,1767.04 573.27,1766.43 573.34,1765.81 573.47,1765.17 573.66,1764.53 573.90,1763.88 574.19,1763.24 574.54,1762.61 574.93,1761.99 575.39,1761.37 574.63,1761.26 573.91,1761.10 573.22,1760.90 572.56,1760.65 571.94,1760.36 571.35,1760.04 570.81,1759.68 570.31,1759.29 569.87,1758.87 569.49,1758.42 569.18,1757.94 568.93,1757.45 568.75,1756.94 568.64,1756.42 568.60,1755.90 568.64,1755.38 568.75,1754.86 568.93,1754.35 569.18,1753.86 569.49,1753.38 569.87,1752.93 570.31,1752.51 570.81,1752.12 571.35,1751.76 571.94,1751.44 572.56,1751.15 573.22,1750.90 573.91,1750.70 574.63,1750.54 575.39,1750.43 574.93,1749.81 574.54,1749.19 574.19,1748.56 573.90,1747.92 573.66,1747.27 573.47,1746.63 573.34,1745.99 573.27,1745.37 573.26,1744.76 573.31,1744.17 573.42,1743.61 573.59,1743.08 573.83,1742.60 574.11,1742.15 574.46,1741.76 574.85,1741.41 575.30,1741.13 575.78,1740.89 576.31,1740.72 576.87,1740.61 577.46,1740.56 578.07,1740.57 578.69,1740.64 579.33,1740.77 579.97,1740.96 580.62,1741.20 581.26,1741.49 581.89,1741.84 582.51,1742.23 583.13,1742.69 583.24,1741.93 583.40,1741.21 583.60,1740.52 583.85,1739.86 584.14,1739.24 584.46,1738.65 584.82,1738.11 585.21,1737.61 585.63,1737.17 586.08,1736.79 586.56,1736.48 587.05,1736.23 587.56,1736.05 588.08,1735.94 588.60,1735.90" fill="none" stroke="#B7B3B5" stroke-width="3.6" stroke-linejoin="round"/><circle cx="588.6" cy="1755.9" r="6.2" fill="none" stroke="#B7B3B5" stroke-width="3.6"/><defs><clipPath id="av"><circle cx="596.7" cy="1944.2" r="38.5"/></clipPath></defs><g clip-path="url(#av)"><rect x="556" y="1903" width="82" height="82" fill="#D6D5D2"/><rect x="610" y="1903" width="30" height="82" fill="#DAD9D6"/><path d="M586,1940 L601,1944 L603,1962 L588,1964 Z" fill="#D9B8A6"/><path d="M585,1925 Q586,1914 599,1914 Q613,1915 613,1928 Q613,1942 603,1948 Q596,1950 591,1945 Q585,1938 585,1925 Z" fill="#D8B4A2"/><path d="M584,1926 Q584,1911 599,1910 Q613,1910 614,1922 Q609,1916 600,1917 Q591,1918 588,1928 Q586,1932 584,1926 Z" fill="#2E2624"/><ellipse cx="596.5" cy="1927.5" rx="2.2" ry="1.1" fill="#7A5A50"/><ellipse cx="606.5" cy="1927.5" rx="2.2" ry="1.1" fill="#7A5A50"/><path d="M598,1939.5 Q601,1940.5 604,1939.5" stroke="#C08C80" stroke-width="1.4" fill="none"/><path d="M560,1990 Q562,1962 574,1955 Q580,1951 586,1950 L594,1972 L602,1950 Q612,1952 622,1958 Q634,1966 636,1990 Z" fill="#F2EFE8"/><path d="M574,1956 Q580,1966 582,1985" stroke="#E6E2DA" stroke-width="1.5" fill="none"/><circle cx="592.5" cy="1976.5" r="9" fill="#B5121E"/><circle cx="590.5" cy="1974.5" r="4.5" fill="#8A0B14"/><path d="M586,1978 Q592,1972 598,1979" stroke="#D8303A" stroke-width="1.5" fill="none"/></g><circle cx="596.7" cy="1944.2" r="38.5" fill="none" stroke="#EDE4E4" stroke-width="1.6"/></svg></body></html>
